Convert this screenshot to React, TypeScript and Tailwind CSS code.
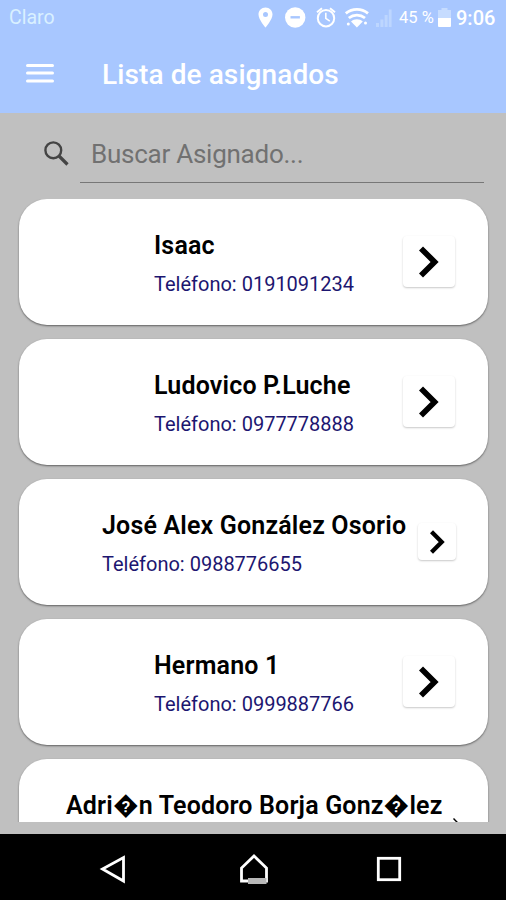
import { clsx } from "clsx";

type Assigned = {
  name: string;
  phone?: string;
  indent: string;
  textWidth: string;
  button: "lg" | "sm" | "xs";
};

const assigned: Assigned[] = [
  { name: "Isaac", phone: "0191091234", indent: "pl-[135px]", textWidth: "w-[249px]", button: "lg" },
  { name: "Ludovico P.Luche", phone: "0977778888", indent: "pl-[135px]", textWidth: "w-[249px]", button: "lg" },
  { name: "José Alex González Osorio", phone: "0988776655", indent: "pl-[83px]", textWidth: "w-[316px]", button: "sm" },
  { name: "Hermano 1", phone: "0999887766", indent: "pl-[135px]", textWidth: "w-[249px]", button: "lg" },
  { name: "Adri\uFFFDn Teodoro Borja Gonz\uFFFDlez", indent: "pl-[47px]", textWidth: "w-[382px]", button: "xs" },
];

function StatusBar() {
  return (
    <div className="flex h-9 items-center pl-[9px] text-white">
      <span className="w-[248px] text-[19.5px] leading-none text-[#d9f0ff]">Claro</span>
      <svg className="h-9 w-[142px] shrink-0" viewBox="257 0 142 36" fill="none">
        {/* location */}
        <path
          fill="#fff"
          fillRule="evenodd"
          d="M265.5 7.5c-4 0-7 3-7 7 0 5 7 13 7 13s7-8 7-13c0-4-3-7-7-7Zm0 4.6a2.5 2.5 0 1 1 0 5 2.5 2.5 0 0 1 0-5Z"
        />
        {/* do not disturb */}
        <circle cx="295.2" cy="17.5" r="10.2" fill="#fff" />
        <path d="M290.5 17.3h9.4" stroke="#a8c7ff" strokeWidth="2.4" />
        {/* alarm */}
        <circle cx="326" cy="18.2" r="8.2" stroke="#fff" strokeWidth="2" />
        <path d="M325.8 12.8v5.6l4 2.8" stroke="#fff" strokeWidth="1.6" />
        <path d="M317 12.2l5-4M335 12.2l-5-4" stroke="#fff" strokeWidth="2" />
        {/* wifi */}
        <path d="M345.8 13.4c6.5-5.4 15.7-5.4 22.2 0" stroke="#fff" strokeWidth="2.8" />
        <path d="M348.8 18c4.8-3.8 11.4-3.8 16.2 0" stroke="#fff" strokeWidth="2.8" />
        <path d="M351 21.4c3.4-2.8 8.4-2.8 11.8 0l-5.9 6Z" fill="#fff" />
        <circle cx="348.3" cy="24" r="1.5" fill="#fff" />
        <circle cx="365.5" cy="23" r="1.5" fill="#fff" />
        {/* signal */}
        <path fill="#bdd6ff" d="M376 23h3v4h-3zM380.4 19.5h3V27h-3zM384.6 15h3v12h-3zM388.8 9.5h2.8V27h-2.8z" />
      </svg>
      <span className="w-[38px] text-[16.5px] leading-none">45 %</span>
      <svg className="h-9 w-[19px] shrink-0" viewBox="437 0 19 36">
        <path fill="#c6dcff" d="M441.5 8h6v2h3.5v8h-13v-8h3.5z" />
        <path fill="#fff" d="M438 18h13v8q0 1-1 1h-11q-1 0-1-1z" />
      </svg>
      <span className="text-[20px] leading-none font-medium">9:06</span>
    </div>
  );
}

function Toolbar() {
  return (
    <div className="flex h-[77px] items-center pl-[26px]">
      <svg className="mb-[3px] h-5 w-[76px]" viewBox="0 0 76 20">
        <path d="M1.5 2.5h25M1.5 10h25M1.5 18h25" stroke="#fff" strokeWidth="3" strokeLinecap="round" />
      </svg>
      <h1 className="text-[28px] leading-none font-medium tracking-[0.1px] text-white">Lista de asignados</h1>
    </div>
  );
}

function SearchField() {
  return (
    <div className="flex h-[86px] pl-[43px]">
      <svg className="mt-[27px] h-7 w-[37px]" viewBox="0 0 37 28" fill="none" stroke="#444">
        <circle cx="10.3" cy="10.3" r="7.9" strokeWidth="2.4" />
        <path d="M16 16l8.5 8.5" strokeWidth="3.2" />
      </svg>
      <div className="flex h-[70px] w-[404px] items-center border-b border-[#777] pt-[13px] pl-[11px] text-[26px] leading-none tracking-[-0.25px] text-[#717171]">
        Buscar Asignado...
      </div>
    </div>
  );
}

function NextButton({ size }: { size: Assigned["button"] }) {
  return (
    <button
      type="button"
      className={clsx(
        "mb-px flex shrink-0 items-center justify-center rounded bg-white",
        size === "lg" && "h-[51px] w-[52px] shadow-[0_1px_2px_rgba(0,0,0,0.22)]",
        size === "sm" && "h-[37px] w-[38px] shadow-[0_1px_2px_rgba(0,0,0,0.22)]",
        size === "xs" && "h-[14px] w-[14px]",
      )}
    >
      <svg
        className={clsx(size === "lg" && "h-8 w-5", size === "sm" && "h-6 w-[15px]", size === "xs" && "h-2 w-[5px]")}
        viewBox="0 0 20 32"
        fill="none"
      >
        <path d="M2 2.4L15.6 16 2 29.6" stroke="#000" strokeWidth="5.7" />
      </svg>
    </button>
  );
}

function AssignedCard({ item }: { item: Assigned }) {
  return (
    <div
      className={clsx(
        "flex h-[126px] shrink-0 items-center rounded-[28px] bg-white shadow-[0_1px_2px_rgba(0,0,0,0.5)]",
        item.indent,
      )}
    >
      <div className={clsx("h-[70px] shrink-0 whitespace-nowrap", item.textWidth)}>
        <div className="text-[25px] leading-[38px] font-semibold tracking-[0.17px] text-black">{item.name}</div>
        {item.phone && <div className="text-[20px] leading-[38px] text-[#1c1670]">Teléfono: {item.phone}</div>}
      </div>
      <NextButton size={item.button} />
    </div>
  );
}

function NavBar() {
  return (
    <div className="flex h-[66px] items-center bg-black">
      <svg className="h-[66px] w-full" viewBox="0 834 506 66" fill="none" stroke="#fff" strokeWidth="2.8">
        <path d="M123.5 857.5v23.5l-21-12z" />
        <path d="M241.5 881v-13l12.5-12 12.5 12v13z" />
        <path d="M248 881h18.5" stroke="#b8b8b8" strokeWidth="6" />
        <rect x="378.3" y="858.3" width="21.4" height="21.4" />
      </svg>
    </div>
  );
}

export default function App() {
  return (
    <div className="flex h-[900px] w-[506px] flex-col overflow-hidden bg-[#c0c0c0] font-['Roboto',sans-serif]">
      <header className="h-[113px] bg-[#a8c7ff]">
        <StatusBar />
        <Toolbar />
      </header>
      <SearchField />
      <main className="flex h-[623px] flex-col gap-3.5 overflow-hidden pr-[18px] pl-[19px]">
        {assigned.map((item) => (
          <AssignedCard key={item.name} item={item} />
        ))}
      </main>
      <div className="h-3" />
      <NavBar />
    </div>
  );
}
